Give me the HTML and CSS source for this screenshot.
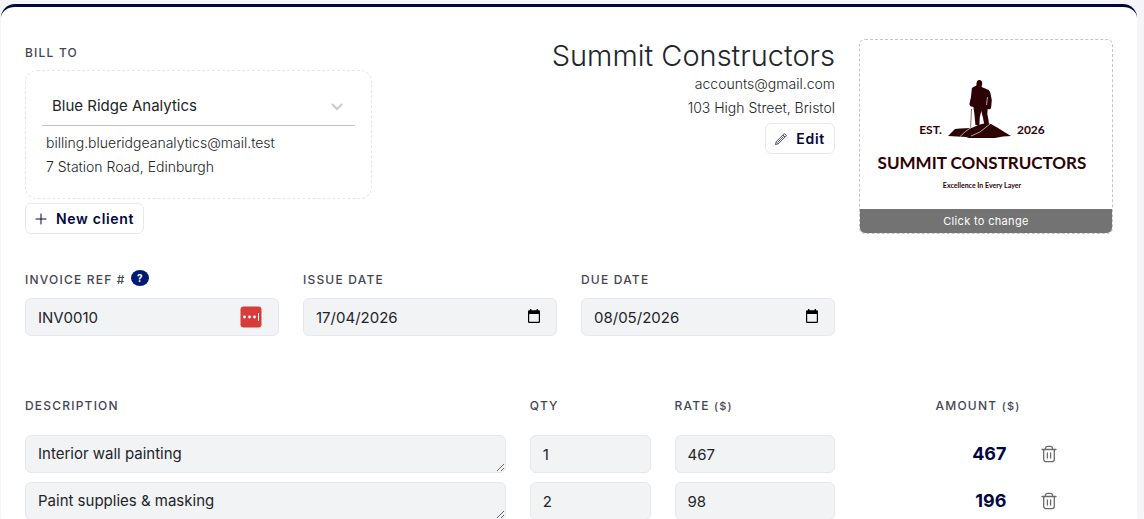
FILE: index.html
```
<!DOCTYPE html>
<html lang="en-GB">
<head>
<meta charset="utf-8">
<title>Invoice</title>
<meta name="viewport" content="width=device-width, initial-scale=1">
<link rel="stylesheet" href="styles.css">
</head>
<body>
<main class="invoice">
  <section class="parties">
    <div class="client">
      <label class="label" for="client">Bill to</label>
      <div class="client-box">
        <div class="select-wrap">
          <select id="client" class="client-select"><option>Blue Ridge Analytics</option></select>
          <svg class="chevron" viewBox="0 0 12 8" width="12" height="8" aria-hidden="true"><path d="M1.500 1.500 6 6l4.500-4.500" fill="none" stroke="#cccccc" stroke-width="2" stroke-linecap="round"/></svg>
        </div>
        <p class="detail">billing.blueridgeanalytics@mail.test</p>
        <p class="detail">7 Station Road, Edinburgh</p>
      </div>
      <button class="btn" type="button">
        <svg viewBox="0 0 12 12" width="12" height="12" aria-hidden="true"><path d="M6 1v10M1 6h10" stroke="currentColor" stroke-width="1" stroke-linecap="round"/></svg>
        New client
      </button>
    </div>
    <div class="company">
      <h1 class="company-name">Summit Constructors</h1>
      <p class="company-line">accounts@gmail.com</p>
      <p class="company-line">103 High Street, Bristol</p>
      <button class="btn" type="button">
        <svg viewBox="0 0 12 12" width="12" height="12" aria-hidden="true"><path d="M.5 11.500l.7-2.800 7.600-7.600a.9.9 0 0 1 1.300 0l.8.8a.9.9 0 0 1 0 1.300l-7.600 7.600zM8 2l2 2M1.400 8.800l1.800 1.800M3 9l5.500-5.500" fill="none" stroke="currentColor" stroke-width=".7" stroke-linejoin="round"/></svg>
        Edit
      </button>
    </div>
    <button class="logo" type="button">
      <span class="logo-art">
        <span class="logo-top">
          <span>EST.</span>
          <svg viewBox="0 0 63 58" width="63" height="58" aria-hidden="true">
            <path fill="#2d0204" d="M0 56l3-3 4-4 5-.5 11-.5 3-1 4-2 8-2 5 1 7 4 8 5 5 3-8 .4-8 1.600H21l-3-1z"/>
            <path fill="#2d0204" d="M28.500 4c0-2.500 1-4 2.800-4 2 0 3 1.500 2.900 4l-.6 3 5.400 2.200c2.500.8 3.500 3 4 6.800l.8 4-.6 7c-.4 2-1 2.500-1.800 2.300l-1.700-.3-.4 5 1.200 6 .5 5-4.500 1-1.500-8-1.700-7-1.500 6-.4 8h-4l-1-11-1-7-3-.7-1-2 1.500-7 1-9 1-1 3.500-1.800z"/>
            <path d="M23.500 29l-1 20" stroke="#6b4a4a" stroke-width=".8"/>
            <path d="M24 47l-6 4-6 5.500M42 44l-10 8-9 4" fill="none" stroke="#f0e6e6" stroke-width=".7"/>
            <path d="M39.500 17l-1 8" stroke="#fff" stroke-width=".6"/>
          </svg>
          <span>2026</span>
        </span>
        <span class="logo-name">SUMMIT CONSTRUCTORS</span>
        <span class="logo-tag">Excellence In Every Layer</span>
      </span>
      <span class="logo-change">Click to change</span>
    </button>
  </section>

  <section class="meta">
    <div class="field">
      <div class="label-row">
        <label class="label" for="ref">Invoice ref #</label>
        <button class="help" type="button" aria-label="Help">?</button>
      </div>
      <div class="input-wrap">
        <input id="ref" class="input" type="text" value="INV0010">
        <svg class="pass-icon" viewBox="0 0 22 22" width="22" height="22" aria-hidden="true"><rect x=".5" y=".5" width="21" height="21" rx="3" fill="#d83c3a"/><circle cx="4.500" cy="11" r="1.400" fill="#fff"/><circle cx="9.500" cy="11" r="1.400" fill="#fff"/><circle cx="14.500" cy="11" r="1.400" fill="#fff"/><path d="M18.500 7v8" stroke="#fff" stroke-width="1"/></svg>
      </div>
    </div>
    <div class="field">
      <div class="label-row"><label class="label" for="issue">Issue date</label></div>
      <div class="input-wrap">
        <input id="issue" class="input" type="text" value="17/04/2026">
        <button class="calendar" type="button" aria-label="Choose issue date"><svg viewBox="0 0 14 16" width="14" height="16" aria-hidden="true"><path fill="#000" fill-rule="evenodd" d="M3 1h1.400v1.200h5.200V1H11v1.200h.8A1.200 1.200 0 0 1 13 3.400v10.400a1.200 1.200 0 0 1-1.200 1.200H2.200A1.200 1.200 0 0 1 1 13.800V3.400a1.200 1.200 0 0 1 1.200-1.200H3zM2.200 6v7.800h9.600V6z"/></svg></button>
      </div>
    </div>
    <div class="field">
      <div class="label-row"><label class="label" for="due">Due date</label></div>
      <div class="input-wrap">
        <input id="due" class="input" type="text" value="08/05/2026">
        <button class="calendar" type="button" aria-label="Choose due date"><svg viewBox="0 0 14 16" width="14" height="16" aria-hidden="true"><path fill="#000" fill-rule="evenodd" d="M3 1h1.400v1.200h5.200V1H11v1.200h.8A1.200 1.200 0 0 1 13 3.400v10.400a1.200 1.200 0 0 1-1.200 1.200H2.200A1.200 1.200 0 0 1 1 13.800V3.400a1.200 1.200 0 0 1 1.200-1.200H3zM2.200 6v7.800h9.600V6z"/></svg></button>
      </div>
    </div>
  </section>

  <table class="items">
    <thead>
      <tr>
        <th class="label c-desc" scope="col">Description</th>
        <th class="label c-qty" scope="col">Qty</th>
        <th class="label c-rate" scope="col">Rate <small>($)</small></th>
        <th class="label c-amount" scope="col">Amount <small>($)</small></th>
        <td class="c-del"></td>
      </tr>
    </thead>
    <tbody>
      <tr>
        <td><textarea class="input" rows="1" aria-label="Description">Interior wall painting</textarea></td>
        <td><input class="input" type="text" aria-label="Quantity" value="1"></td>
        <td><input class="input" type="text" aria-label="Rate" value="467"></td>
        <td class="amount">467</td>
        <td><button class="delete" type="button" aria-label="Delete item"><svg viewBox="0 0 16 18" width="16" height="18" aria-hidden="true"><path d="M1 4.500h14M4.500 4.500V3.300a2 2 0 0 1 2-2h3a2 2 0 0 1 2 2v1.200M2.700 4.500v9.700a2.500 2.500 0 0 0 2.500 2.500h5.600a2.500 2.500 0 0 0 2.500-2.500V4.500M6.400 8v5M9.600 8v5" fill="none" stroke="currentColor" stroke-width="1.300" stroke-linecap="round"/></svg></button></td>
      </tr>
      <tr>
        <td><textarea class="input" rows="1" aria-label="Description">Paint supplies &amp; masking</textarea></td>
        <td><input class="input" type="text" aria-label="Quantity" value="2"></td>
        <td><input class="input" type="text" aria-label="Rate" value="98"></td>
        <td class="amount">196</td>
        <td><button class="delete" type="button" aria-label="Delete item"><svg viewBox="0 0 16 18" width="16" height="18" aria-hidden="true"><path d="M1 4.500h14M4.500 4.500V3.300a2 2 0 0 1 2-2h3a2 2 0 0 1 2 2v1.200M2.700 4.500v9.700a2.500 2.500 0 0 0 2.500 2.500h5.600a2.500 2.500 0 0 0 2.500-2.500V4.500M6.400 8v5M9.600 8v5" fill="none" stroke="currentColor" stroke-width="1.300" stroke-linecap="round"/></svg></button></td>
      </tr>
    </tbody>
  </table>
</main>
</body>
</html>
```
FILE: styles.css
```
* { box-sizing: border-box; }
html { overflow: hidden; }
body {
  margin: 0;
  padding: 4px 7px 0 1px;
  background: #f5f5f8;
  color: #212529;
  font: 400 15px/24px Inter, "Liberation Sans", sans-serif;
}
h1, p { margin: 0; }
button, input, select, textarea { font: inherit; color: inherit; }
button { cursor: pointer; }

.invoice {
  padding: 32px 24px 0;
  background: #fff;
  border-top: 3px solid #000640;
  border-radius: 14px;
}

.label {
  color: #454552;
  font-size: 12px;
  font-weight: 500;
  line-height: 16px;
  letter-spacing: 0.1em;
  text-transform: uppercase;
}

.parties, .meta {
  display: grid;
  grid-template-columns: repeat(12, minmax(0, 1fr));
  column-gap: 24px;
}
.client {
  grid-column: span 4;
  display: flex;
  flex-direction: column;
  align-items: flex-start;
  padding-top: 6px;
}
.client-box {
  width: 100%;
  margin: 9px 0 4px;
  padding: 16px 16px 19px;
  border: 1px dashed #e6e6ea;
  border-radius: 12px;
}
.select-wrap { position: relative; margin-bottom: 5px; }
.client-select {
  display: block;
  width: 100%;
  height: 39px;
  padding: 0 10px;
  appearance: none;
  background: none;
  border: 0;
  border-bottom: 1px solid #c1c1c9;
}
.chevron { position: absolute; right: 12px; top: 16px; }
.detail { padding-left: 4px; font-size: 14px; font-weight: 300; }

.btn {
  display: inline-flex;
  align-items: center;
  gap: 9px;
  height: 31px;
  padding: 0 9px;
  background: #fff;
  border: 1px solid #e8e8ec;
  border-radius: 6px;
  color: #000640;
  font-size: 14px;
  font-weight: 600;
  letter-spacing: 0.05em;
}

.company {
  grid-column: span 5;
  display: flex;
  flex-direction: column;
  align-items: flex-end;
}
.company-name { font-size: 29px; font-weight: 300; line-height: 33px; white-space: nowrap; }
.company-line { font-size: 14px; font-weight: 300; }
.company .btn { margin-top: 3px; }

.logo {
  grid-column: span 3;
  display: flex;
  flex-direction: column;
  height: 195px;
  padding: 0;
  overflow: hidden;
  background: #fff;
  border: 1px dashed #c4c4c4;
  border-radius: 6px;
  color: #2d0204;
  font-family: Lato, sans-serif;
}
.logo-art {
  align-self: stretch;
  display: flex;
  flex: 1;
  flex-direction: column;
  align-items: center;
  padding: 40px 8px 0 0;
}
.logo-top { display: flex; align-items: flex-end; gap: 6px; font-size: 12px; font-weight: 700; line-height: 16px; }
.logo-name { margin-top: 13px; font-size: 17px; font-weight: 700; line-height: 24px; white-space: nowrap; }
.logo-tag { margin-top: 6px; font-size: 7px; font-weight: 700; line-height: 8px; }
.logo-change {
  align-self: stretch;
  padding-top: 1px;
  background: #737373;
  color: #fff;
  font: 400 11px/23px Inter, sans-serif;
  letter-spacing: 0.03em;
}

.meta { margin-top: 35px; }
.field { grid-column: span 3; }
.label-row { display: flex; align-items: center; gap: 5px; height: 22px; margin-bottom: 7px; }
.help {
  width: 18px;
  height: 16px;
  margin-bottom: 4px;
  padding: 0;
  background: #001a72;
  border: 0;
  border-radius: 50%;
  color: #fff;
  font-size: 10px;
  font-weight: 700;
  line-height: 16px;
}
.input {
  display: block;
  width: 100%;
  height: 38px;
  padding: 6px 12px;
  background: #f2f3f5;
  border: 1px solid #e7e8ec;
  border-radius: 6px;
  line-height: 24px;
}
textarea.input { resize: vertical; overflow: hidden; }
.input-wrap { position: relative; }
.pass-icon { position: absolute; right: 17px; top: 8px; }
.calendar {
  position: absolute;
  right: 16px;
  top: 10px;
  display: flex;
  padding: 0;
  background: none;
  border: 0;
}

.items {
  width: 100%;
  margin-top: 57px;
  border-collapse: collapse;
  table-layout: fixed;
}
.items th { padding: 0 0 17px; height: 42px; text-align: left; }
.items td { padding: 0 24px 9px 0; }
.items small { font-size: 11px; }
.c-desc { width: 46.4%; }
.c-qty { width: 13.3%; }
.c-rate { width: 17%; }
.items .c-amount { width: 14.8%; text-align: right; }
.items .amount {
  padding-right: 14px;
  color: #000640;
  font-size: 18px;
  font-weight: 700;
  text-align: right;
}
.delete {
  display: flex;
  margin-left: 20px;
  padding: 0;
  background: none;
  border: 0;
  color: #6b6b6b;
}
```
